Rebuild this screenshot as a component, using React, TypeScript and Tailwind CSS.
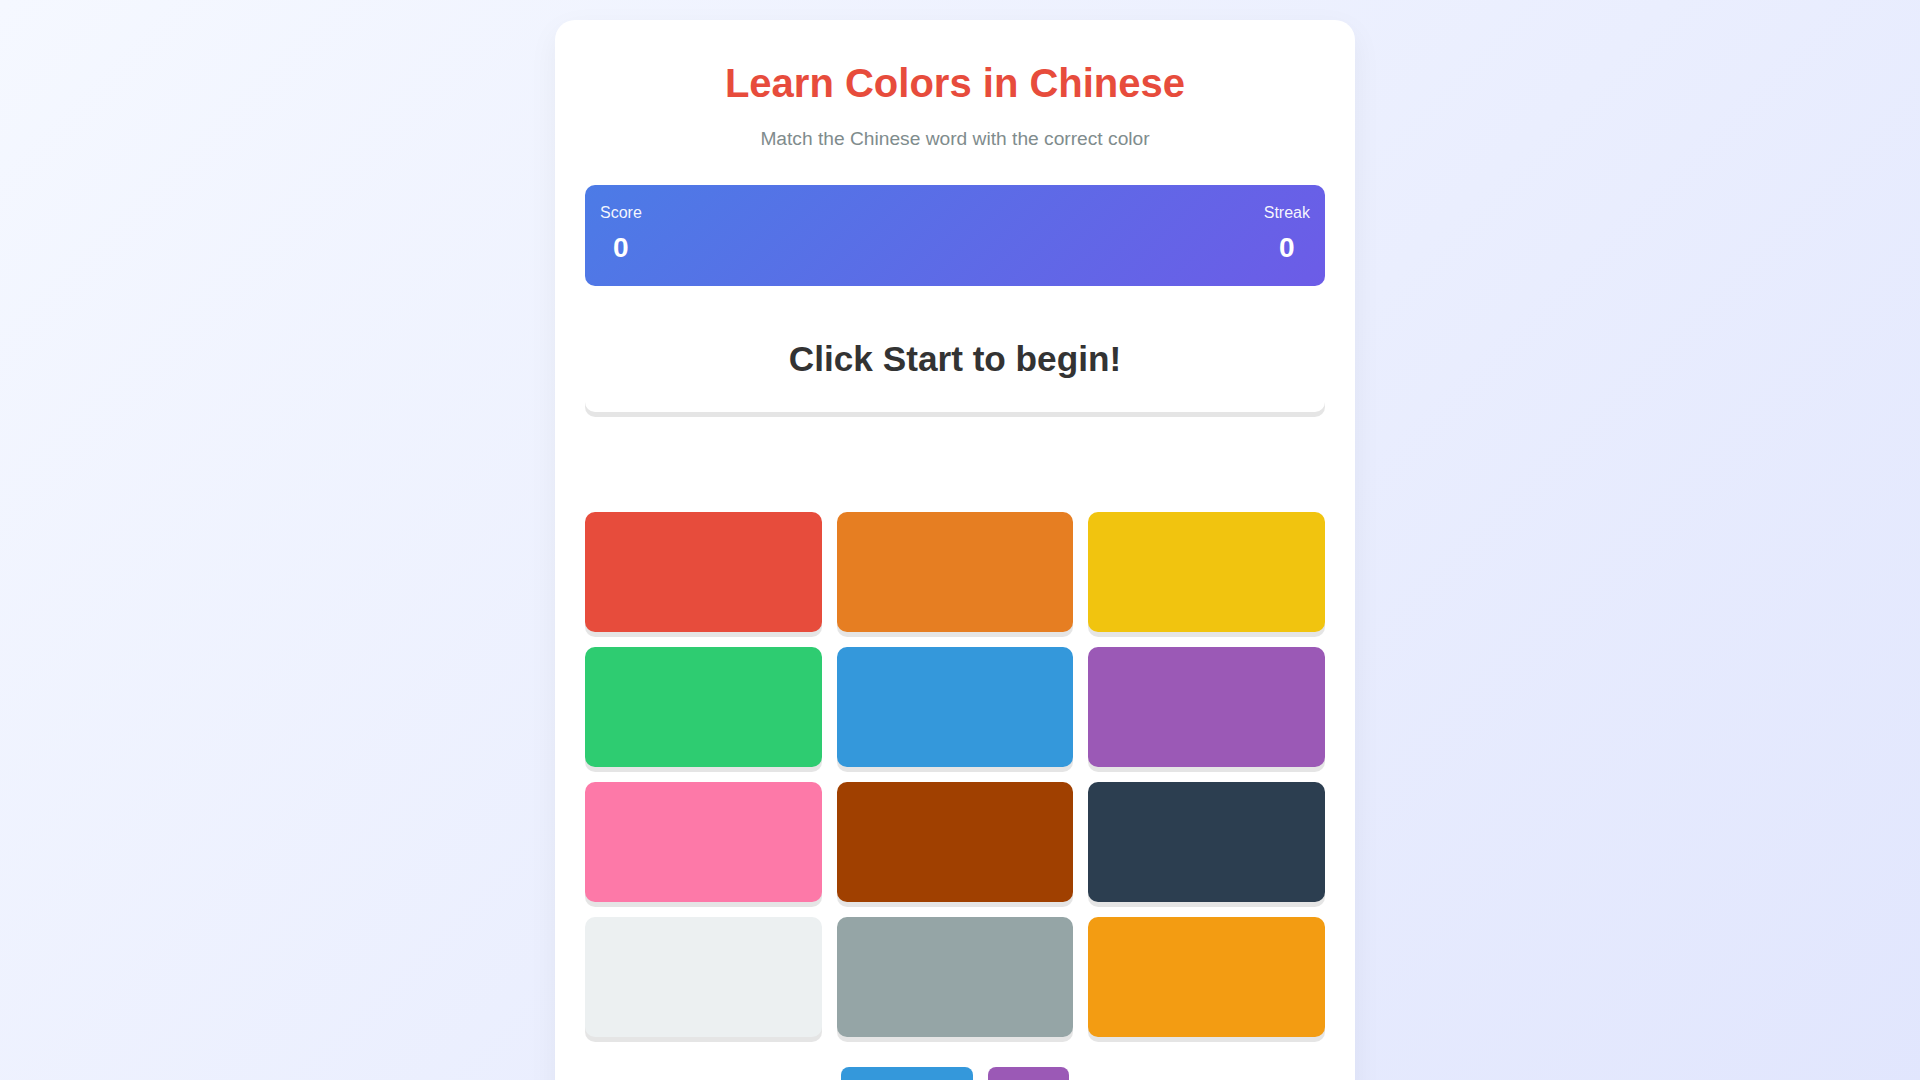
import React from "react";

interface ColorTile {
  name: string;
  className: string;
}

const colors: ColorTile[] = [
  { name: "red", className: "bg-[#e74c3c]" },
  { name: "orange", className: "bg-[#e67e22]" },
  { name: "yellow", className: "bg-[#f1c40f]" },
  { name: "green", className: "bg-[#2ecc71]" },
  { name: "blue", className: "bg-[#3498db]" },
  { name: "purple", className: "bg-[#9b59b6]" },
  { name: "pink", className: "bg-[#fd79a8]" },
  { name: "brown", className: "bg-[#a04000]" },
  { name: "black", className: "bg-[#2c3e50]" },
  { name: "white", className: "bg-[#ecf0f1]" },
  { name: "gray", className: "bg-[#95a5a6]" },
  { name: "gold", className: "bg-[#f39c12]" },
];

const steps = [
  "Press Start Game to get a Chinese color word.",
  "Click the tile that matches the word.",
  "Each right answer adds to your score and streak.",
  "Use Skip if you get stuck on a word.",
];

const Stat = ({ label, value }: { label: string; value: number }) => (
  <div className="flex flex-col items-center">
    <span className="text-[16px] leading-[18.4px] text-white/95">{label}</span>
    <span className="mt-[10px] text-[28px] font-bold leading-[32.2px] text-white">
      {value}
    </span>
  </div>
);

export default function App() {
  return (
    // extra right padding stands in for the 10px scrollbar gutter
    <div className="min-h-screen bg-[linear-gradient(135deg,#f5f8ff_0%,#dfe4fd_100%)] pt-[20px] pb-[20px] pl-[20px] pr-[30px] font-['Liberation_Sans',Arial,sans-serif]">
      <div className="mx-auto w-full max-w-[800px] rounded-[20px] bg-white px-[30px] pt-[40px] pb-[30px] shadow-[0_10px_30px_rgba(0,0,0,0.05)]">
        <h1 className="text-center text-[40px] font-bold leading-[46px] text-[#e74c3c]">
          Learn Colors in Chinese
        </h1>
        <p className="mt-[22px] text-center text-[19.2px] leading-[22px] text-[#7f8c8d]">
          Match the Chinese word with the correct color
        </p>

        <div className="mt-[35px] flex justify-between rounded-[10px] bg-[linear-gradient(135deg,#4c7be6_0%,#6c5ce7_100%)] px-[15px] pt-[19px] pb-[21px]">
          <Stat label="Score" value={0} />
          <Stat label="Streak" value={0} />
        </div>

        <div className="mt-[20px] rounded-[10px] bg-white py-[33px] text-center shadow-[0_5px_0_rgba(0,0,0,0.1)]">
          <h2 className="text-[35.2px] font-bold leading-[40.5px] text-[#333]">
            Click Start to begin!
          </h2>
        </div>

        <div className="my-[20px] min-h-[60px]" />

        <div className="grid grid-cols-3 gap-[15px]">
          {colors.map((c) => (
            <button
              key={c.name}
              aria-label={c.name}
              className={`h-[120px] rounded-[10px] shadow-[0_5px_0_rgba(0,0,0,0.1)] ${c.className}`}
            />
          ))}
        </div>

        <div className="mt-[30px] flex justify-center gap-[15px]">
          <button className="rounded-[8px] bg-[#3498db] px-[25px] py-[12px] text-[16px] leading-[18.4px] text-white">
            Start Game
          </button>
          <button className="rounded-[8px] bg-[#9b59b6] px-[25px] py-[12px] text-[16px] leading-[18.4px] text-white">
            Skip
          </button>
        </div>

        <div className="mt-[30px] min-h-[221px] rounded-[10px] bg-[#f8f9fa] p-[20px]">
          <h3 className="text-[18px] font-bold text-[#2c3e50]">How to Play</h3>
          <ul className="mt-[10px] list-disc pl-[20px] text-[15px] leading-[25px] text-[#555]">
            {steps.map((s) => (
              <li key={s}>{s}</li>
            ))}
          </ul>
        </div>
      </div>
    </div>
  );
}
